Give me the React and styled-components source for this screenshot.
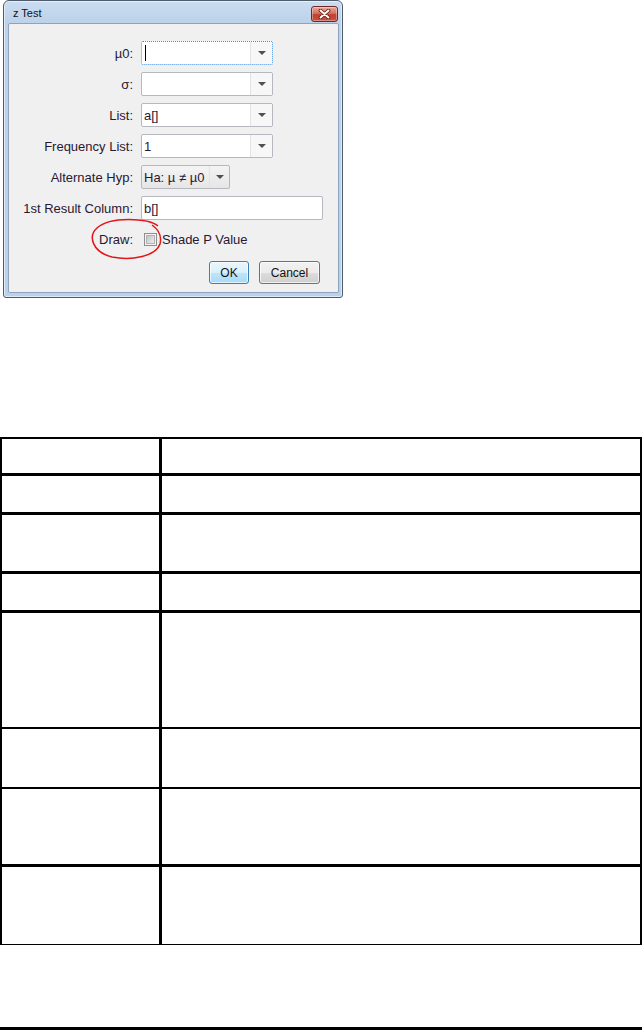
import React from "react";
import styled, { createGlobalStyle } from "styled-components";

const Global = createGlobalStyle`
  html, body { margin: 0; padding: 0; background: #fff; }
  body { font-family: "Liberation Sans", Arial, sans-serif; }
`;

const Page = styled.div`
  width: 642px;
  display: flex;
  flex-direction: column;
`;

const DialogArea = styled.div`
  position: relative;
  width: 343px;
  padding-left: 3px;
  box-sizing: border-box;
`;

const Window = styled.div`
  width: 340px;
  box-sizing: border-box;
  border: 1px solid #4e5b6b;
  border-radius: 6px 6px 3px 3px;
  background: linear-gradient(#cadcf0 0px, #bcd2ea 22px, #b9d1ea 100%);
  box-shadow: inset 0 0 0 1px rgba(255, 255, 255, 0.55);
  display: flex;
  flex-direction: column;
  padding: 0 3px 4px 4px;
`;

const TitleBar = styled.div`
  height: 22px;
  display: flex;
  align-items: center;
  justify-content: space-between;
  padding-left: 5px;
  padding-right: 1px;
`;

const Title = styled.span`
  font-size: 11px;
  color: #111;
  margin-top: 1px;
`;

const CloseButton = styled.div`
  width: 27px;
  height: 16px;
  box-sizing: border-box;
  border: 1px solid #6b2a22;
  border-radius: 3px;
  background: linear-gradient(#e9a99c 0%, #d7705f 45%, #c2402e 55%, #c9503d 100%);
  box-shadow: inset 0 0 0 1px rgba(255, 255, 255, 0.35);
  display: flex;
  align-items: center;
  justify-content: center;
  margin-top: 3px;
`;

const Panel = styled.div`
  background: #f0f0f0;
  border: 1px solid #8fa3bc;
  border-radius: 2px;
  padding: 17px 18px 8px 0;
  display: flex;
  flex-direction: column;
`;

const Form = styled.div`
  display: grid;
  grid-template-columns: 124px auto;
  grid-auto-rows: 24px;
  column-gap: 8px;
  row-gap: 7px;
  align-items: center;
`;

const Label = styled.span`
  justify-self: end;
  font-size: 13px;
  color: #2a1733;
  white-space: nowrap;
`;

const Field = styled.div`
  width: ${(p) => p.$w}px;
  height: 24px;
  box-sizing: border-box;
  border: 1px ${(p) => (p.$focus ? "dotted #3b8de0" : "solid #b5b8be")};
  border-radius: 2px;
  background: ${(p) => (p.$grey ? "linear-gradient(#f4f4f4, #e6e6e6)" : "#fff")};
  display: flex;
  align-items: stretch;
`;

const FieldText = styled.div`
  flex: 1;
  display: flex;
  align-items: center;
  padding-left: 2px;
  font-size: 13px;
  color: #2a1733;
  white-space: nowrap;
`;

const Caret = styled.span`
  width: 1px;
  height: 16px;
  background: #000;
  margin-left: 1px;
`;

const ArrowBox = styled.div`
  width: ${(p) => p.$w || 21}px;
  border-left: 1px solid #e3e3e3;
  background: ${(p) => (p.$grey ? "transparent" : "#f7f7f7")};
  display: flex;
  align-items: center;
  justify-content: center;
`;

const Triangle = styled.span`
  width: 0;
  height: 0;
  border-left: 4px solid transparent;
  border-right: 4px solid transparent;
  border-top: 4px solid #4f4f4f;
`;

const CheckRow = styled.div`
  display: flex;
  align-items: center;
  gap: 5px;
  padding-left: 3px;
  font-size: 13px;
  color: #2a1733;
`;

const CheckBox = styled.span`
  width: 13px;
  height: 13px;
  box-sizing: border-box;
  border: 1px solid #8e8f8f;
  background: #f4f4f4;
  padding: 1px;
  display: flex;
  &::after {
    content: "";
    flex: 1;
    background: linear-gradient(135deg, #c4c4c4, #ececec);
    border: 1px solid #b3b3b3;
  }
`;

const ButtonRow = styled.div`
  display: flex;
  justify-content: flex-end;
  gap: 10px;
  margin-top: 10px;
`;

const Button = styled.div`
  width: ${(p) => p.$w}px;
  height: 23px;
  box-sizing: border-box;
  border: 1px solid ${(p) => (p.$primary ? "#3c7fb1" : "#707070")};
  border-radius: 3px;
  background: ${(p) =>
    p.$primary
      ? "linear-gradient(#eaf6fd 0%, #d9f0fc 50%, #bee6fd 51%, #a7d9f5 100%)"
      : "linear-gradient(#f2f2f2 0%, #ebebeb 50%, #dddddd 51%, #cfcfcf 100%)"};
  box-shadow: inset 0 0 0 1px rgba(255, 255, 255, 0.7);
  display: flex;
  align-items: center;
  justify-content: center;
  font-size: 12px;
  color: #111;
`;

const Annotation = styled.svg`
  position: absolute;
  left: 0;
  top: 0;
  pointer-events: none;
`;

const Table = styled.div`
  margin-top: 139px;
  width: 642px;
  box-sizing: border-box;
  border-top: 2px solid #000;
  border-left: 2px solid #000;
  border-right: 2px solid #000;
  display: flex;
  flex-direction: column;
`;

const Row = styled.div`
  display: grid;
  grid-template-columns: 160px 1fr;
  height: ${(p) => p.$h}px;
  border-bottom: ${(p) => p.$b}px solid #000;
`;

const KeyCell = styled.div`
  border-right: 3px solid #000;
`;

const ValueCell = styled.div``;

const Rule = styled.div`
  margin-top: 82px;
  height: 3px;
  width: 642px;
  background: #000;
`;

const rows = [
  [34, 3],
  [36, 3],
  [56, 3],
  [36, 3],
  [114, 2],
  [58, 2],
  [75, 3],
  [77, 1],
];

function Combo({ w, text, focus, grey }) {
  return (
    <Field $w={w} $focus={focus} $grey={grey}>
      <FieldText>
        {focus ? <Caret /> : text}
      </FieldText>
      <ArrowBox $grey={grey} $w={grey ? 19 : 21}>
        <Triangle />
      </ArrowBox>
    </Field>
  );
}

export default function App() {
  return (
    <Page>
      <Global />
      <DialogArea>
        <Window>
          <TitleBar>
            <Title>z Test</Title>
            <CloseButton>
              <svg width="13" height="10" viewBox="0 0 13 10">
                <path d="M2.5 1.5 L10.5 8.5 M10.5 1.5 L2.5 8.5" stroke="#5a1b14" strokeWidth="3.6" strokeLinecap="round" />
                <path d="M2.5 1.5 L10.5 8.5 M10.5 1.5 L2.5 8.5" stroke="#fff" strokeWidth="2" strokeLinecap="round" />
              </svg>
            </CloseButton>
          </TitleBar>
          <Panel>
            <Form>
              <Label>µ0:</Label>
              <Combo w={132} focus />
              <Label>σ:</Label>
              <Combo w={132} text="" />
              <Label>List:</Label>
              <Combo w={132} text="a[]" />
              <Label>Frequency List:</Label>
              <Combo w={132} text="1" />
              <Label>Alternate Hyp:</Label>
              <Combo w={89} text="Ha: µ ≠ µ0" grey />
              <Label>1st Result Column:</Label>
              <Field $w={182}>
                <FieldText>b[]</FieldText>
              </Field>
              <Label>Draw:</Label>
              <CheckRow>
                <CheckBox />
                <span>Shade P Value</span>
              </CheckRow>
            </Form>
            <ButtonRow>
              <Button $w={40} $primary>OK</Button>
              <Button $w={61}>Cancel</Button>
            </ButtonRow>
          </Panel>
        </Window>
        <Annotation width="343" height="298" viewBox="0 0 343 298">
          <path
            d="M158 226 C148 218, 110 216, 97 228 C88 236, 92 252, 112 257 C132 261, 156 256, 160 244 C162 236, 159 230, 152 225"
            fill="none"
            stroke="#e3141b"
            strokeWidth="1.5"
          />
        </Annotation>
      </DialogArea>
      <Table>
        {rows.map(([h, b], i) => (
          <Row key={i} $h={h} $b={b}>
            <KeyCell />
            <ValueCell />
          </Row>
        ))}
      </Table>
      <Rule />
    </Page>
  );
}
